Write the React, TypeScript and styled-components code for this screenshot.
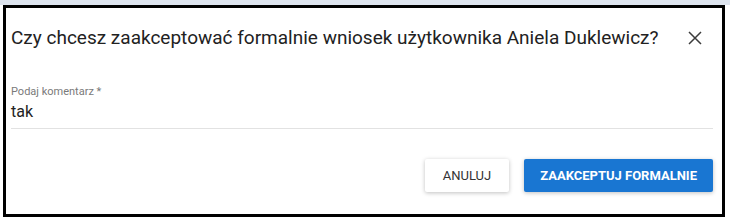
import styled, { createGlobalStyle } from "styled-components";

const GlobalStyle = createGlobalStyle`
  html, body {
    margin: 0;
    padding: 0;
    background: #ffffff;
  }
  body {
    font-family: Roboto, "Liberation Sans", Arial, sans-serif;
    width: 730px;
    height: 223px;
    overflow: hidden;
  }
`;

const Page = styled.div`
  height: 223px;
  background: linear-gradient(#dde4ee 0, #dde4ee 5px, #ffffff 5px);
  padding: 5px 5px 0 3px;
  box-sizing: border-box;
`;

const Dialog = styled.div`
  width: 722px;
  height: 212px;
  box-sizing: border-box;
  border: 3px solid #000;
  background: #fff;
  display: flex;
  flex-direction: column;
`;

const Header = styled.div`
  display: flex;
  align-items: center;
  justify-content: space-between;
  padding: 17px 19px 0 5px;
  height: 42px;
  box-sizing: border-box;
`;

const Title = styled.h2`
  margin: 0;
  font-size: 19px;
  font-weight: 400;
  color: #222222;
  white-space: nowrap;
`;

const CloseButton = styled.button`
  border: none;
  background: transparent;
  padding: 0;
  width: 16px;
  height: 16px;
  display: flex;
  align-items: center;
  justify-content: center;
  color: #3c3c3c;
  cursor: pointer;
`;

const Field = styled.div`
  margin: 35px 9px 0 5px;
  border-bottom: 1px solid #e2e2e2;
  padding-bottom: 7px;
  display: flex;
  flex-direction: column;
`;

const Label = styled.label`
  font-size: 11px;
  color: #7a7a7a;
  line-height: 13px;
`;

const Value = styled.div`
  font-size: 16px;
  color: #222222;
  margin-top: 4px;
  line-height: 19px;
`;

const Actions = styled.div`
  display: flex;
  justify-content: flex-end;
  gap: 15px;
  margin: 30px 9px 0 0;
`;

const Button = styled.button<{ $primary?: boolean }>`
  height: 33px;
  padding: 0 ${(p) => (p.$primary ? "16px" : "18px")};
  border: none;
  border-radius: 2px;
  font-family: Roboto, "Liberation Sans", Arial, sans-serif;
  font-size: 13px;
  font-weight: ${(p) => (p.$primary ? 700 : 400)};
  text-transform: uppercase;
  background: ${(p) => (p.$primary ? "#1976d2" : "#ffffff")};
  color: ${(p) => (p.$primary ? "#ffffff" : "#333333")};
  box-shadow: 0 1px 4px rgb(0 0 0 / 25%);
  cursor: pointer;
`;

export default function App() {
  return (
    <>
      <GlobalStyle />
      <Page>
        <Dialog>
          <Header>
            <Title>Czy chcesz zaakceptować formalnie wniosek użytkownika Aniela Duklewicz?</Title>
            <CloseButton aria-label="Zamknij">
              <svg width="14" height="14" viewBox="0 0 14 14" fill="none" stroke="currentColor" strokeWidth="1.5">
                <path d="M1 1L13 13M13 1L1 13" />
              </svg>
            </CloseButton>
          </Header>
          <Field>
            <Label>Podaj komentarz *</Label>
            <Value>tak</Value>
          </Field>
          <Actions>
            <Button>Anuluj</Button>
            <Button $primary>Zaakceptuj formalnie</Button>
          </Actions>
        </Dialog>
      </Page>
    </>
  );
}
